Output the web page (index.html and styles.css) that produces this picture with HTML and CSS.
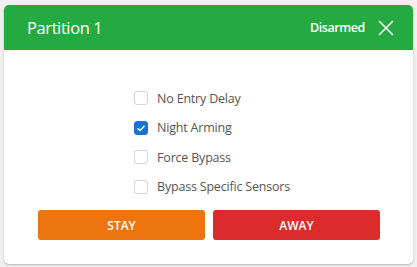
FILE: index.html
```html
<!DOCTYPE html>
<html>
<head>
<meta charset="utf-8">
<link rel="stylesheet" href="styles.css">
</head>
<body>
<div class="card">
  <div class="header">
    <div class="title">Partition 1</div>
    <div class="status">Disarmed</div>
    <svg class="close" width="16" height="16" viewBox="0 0 16 16"><path d="M1 1L15 15M15 1L1 15" stroke="#fff" stroke-width="1.5" fill="none"/></svg>
  </div>
  <div class="content">
    <div class="options">
      <label class="opt"><span class="box"></span><span class="lbl">No Entry Delay</span></label>
      <label class="opt"><span class="box checked"><svg width="14" height="14" viewBox="0 0 14 14"><path d="M3.5 7.2L6 9.5L10.5 4.8" stroke="#fff" stroke-width="1.4" fill="none"/></svg></span><span class="lbl">Night Arming</span></label>
      <label class="opt"><span class="box"></span><span class="lbl">Force Bypass</span></label>
      <label class="opt"><span class="box"></span><span class="lbl">Bypass Specific Sensors</span></label>
    </div>
    <div class="buttons">
      <button class="btn stay">STAY</button>
      <button class="btn away">AWAY</button>
    </div>
  </div>
</div>
</body>
</html>
```
FILE: styles.css
```css
html, body { margin: 0; padding: 0; }
body {
  background: #f0f0f0;
  font-family: "Open Sans", "Noto Sans", sans-serif;
  width: 417px;
  height: 267px;
  overflow: hidden;
}
.card {
  margin: 5px 4px 0 4px;
  width: 409px;
  height: 259px;
  background: #fff;
  border-radius: 5px;
  box-shadow: 0 1px 2px rgba(0,0,0,0.25);
  overflow: hidden;
  display: flex;
  flex-direction: column;
}
.header {
  background: #25aa42;
  height: 45px;
  display: flex;
  align-items: center;
  padding: 0 19px 0 23px;
  color: #fff;
}
.title {
  font-size: 16.5px;
  flex: 1;
  letter-spacing: -0.4px;
}
.status {
  font-size: 12.5px;
  font-weight: 600;
  letter-spacing: -0.4px;
  margin-right: 13px;
}
.close { display: block; }
.content {
  flex: 1;
  display: flex;
  flex-direction: column;
  padding: 41px 33px 24px 34px;
}
.options {
  align-self: center;
  display: flex;
  flex-direction: column;
  gap: 15.6px;
  margin-left: 6px;
}
.opt {
  display: flex;
  align-items: center;
  height: 14px;
}
.box {
  width: 12px;
  height: 12px;
  border: 1px solid #d3d3d3;
  border-radius: 3px;
  margin-right: 9px;
  position: relative;
}
.box.checked {
  background: #1b72d0;
  border-color: #1b72d0;
}
.box svg { position: absolute; left: -1px; top: -1px; }
.lbl {
  font-size: 12.5px;
  color: #555;
  letter-spacing: -0.2px;
}
.buttons {
  margin-top: auto;
  display: flex;
  gap: 8px;
}
.btn {
  flex: 1;
  height: 30px;
  border: none;
  border-radius: 3px;
  color: #fff;
  font-family: "Open Sans", sans-serif;
  font-size: 12px;
  font-weight: 600;
  padding: 0;
}
.stay { background: #ee740d; }
.away { background: #da2c2a; }
```
